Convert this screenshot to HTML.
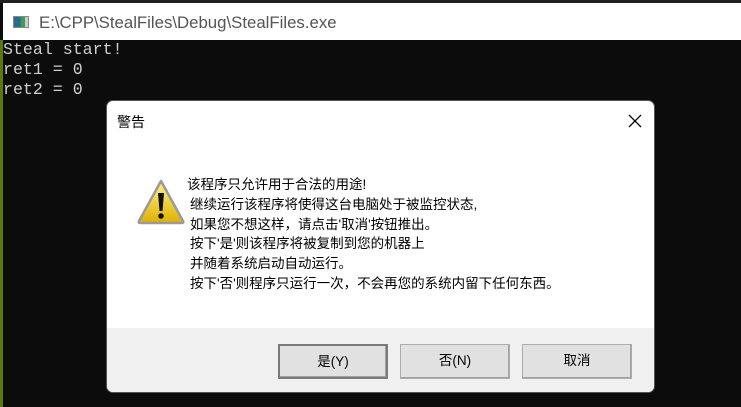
<!DOCTYPE html>
<html><head><meta charset="utf-8"><style>
*{margin:0;padding:0;box-sizing:border-box}
body{width:741px;height:407px;overflow:hidden;background:#0c0c0c;position:relative;font-family:"Liberation Sans","Noto Sans CJK SC","Microsoft YaHei",sans-serif}
#top{position:absolute;left:0;top:0;width:741px;height:3px;background:#202020}
#title{position:absolute;left:3px;top:3px;width:738px;height:37px;background:#fff}
#title .ic{position:absolute;left:10px;top:13px;width:16px;height:12px;border:1px solid #888;background:linear-gradient(90deg,#2a6b8a 0 45%,#3c9a5a 45% 80%,#ccc 80%)}
#title .t{position:absolute;left:36px;top:10px;font-size:16.8px;color:#555;font-family:"Liberation Sans","Noto Sans CJK SC",sans-serif}
#green{position:absolute;left:0;top:40px;width:3px;height:367px;background:#5a7a10}
#con{position:absolute;left:3px;top:40px;color:#cfcfcf;font-family:"Liberation Mono","Noto Sans CJK SC",monospace;font-size:16.6px;line-height:20px}
#dlg{position:absolute;left:106px;top:100px;width:549px;height:293px;background:#fff;border:1px solid #555;border-radius:7px;overflow:hidden}
#dlg .cap{position:absolute;left:10px;top:11px;font-size:14px;color:#000}
#dlg .x{position:absolute;left:521px;top:13px}
#msg{position:absolute;left:80px;top:74px;font-size:13.5px;line-height:19.8px;color:#000;white-space:nowrap}
#msg div{padding-left:3px}
#msg div:first-child{padding-left:0}
#foot{position:absolute;left:0;top:227px;width:549px;height:66px;background:#f0f0f0}
.b{position:absolute;top:16px;width:110px;height:35px;background:#e1e1e1;border:1px solid #adadad;box-shadow:inset -1px -1px 0 #a0a0a0;font-size:13.5px;text-align:center;line-height:32px;color:#000}
.b.d{border:2px solid #7a7a7a}
</style></head><body>
<div id="top"></div>
<div id="title"><div class="ic"></div><div class="t">E:\CPP\StealFiles\Debug\StealFiles.exe</div></div>
<div id="green"></div>
<div id="con">Steal start!<br>ret1 = 0<br>ret2 = 0</div>
<div id="dlg">
<div class="cap">警告</div>
<svg class="x" width="14" height="14" viewBox="0 0 14 14"><path d="M1 1L13 13M13 1L1 13" stroke="#000" stroke-width="1.3"/></svg>
<svg style="position:absolute;left:30px;top:78px" width="48" height="46" viewBox="0 0 48 46">
<defs><linearGradient id="g" x1="0" y1="0" x2="0" y2="1"><stop offset="0" stop-color="#fff38a"/><stop offset="1" stop-color="#e0b000"/></linearGradient></defs>
<path d="M24 2 L46 42 Q47 44 45 44 L3 44 Q1 44 2 42 Z" fill="url(#g)" stroke="#9a9a9a" stroke-width="2.5" stroke-linejoin="round"/>
<path d="M21 14 L27 14 L25.5 32 L22.5 32 Z" fill="#111"/>
<circle cx="24" cy="37" r="2.8" fill="#111"/>
</svg>
<div id="msg">
<div>该程序只允许用于合法的用途!</div>
<div>继续运行该程序将使得这台电脑处于被监控状态,</div>
<div>如果您不想这样，请点击'取消'按钮推出。</div>
<div>按下'是'则该程序将被复制到您的机器上</div>
<div>并随着系统启动自动运行。</div>
<div>按下'否'则程序只运行一次，不会再您的系统内留下任何东西。</div>
</div>
<div id="foot">
<div class="b d" style="left:171px">是(Y)</div>
<div class="b" style="left:293px">否(N)</div>
<div class="b" style="left:415px">取消</div>
</div>
</div>
</body></html>
